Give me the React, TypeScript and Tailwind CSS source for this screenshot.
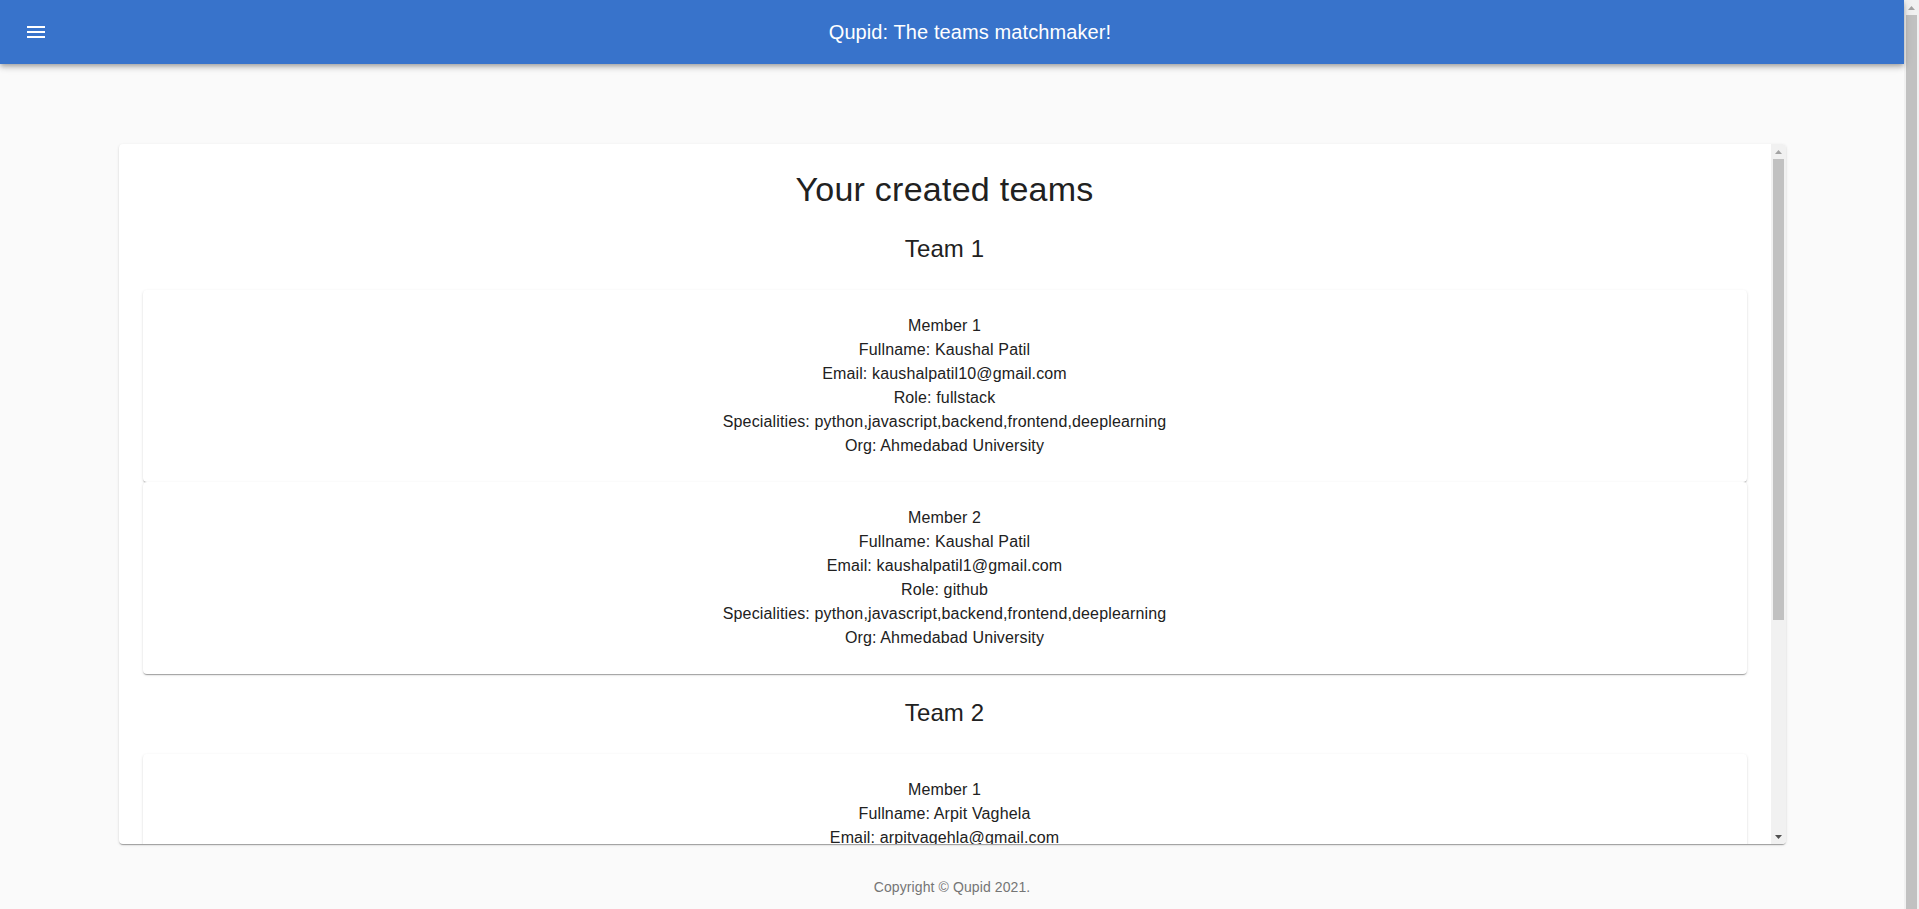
import React from 'react';

interface Member {
  fullname: string;
  email: string;
  role: string;
  specialities: string;
  org: string;
}

interface Team {
  name: string;
  members: Member[];
}

const teams: Team[] = [
  {
    name: 'Team 1',
    members: [
      {
        fullname: 'Kaushal Patil',
        email: 'kaushalpatil10@gmail.com',
        role: 'fullstack',
        specialities: 'python,javascript,backend,frontend,deeplearning',
        org: 'Ahmedabad University',
      },
      {
        fullname: 'Kaushal Patil',
        email: 'kaushalpatil1@gmail.com',
        role: 'github',
        specialities: 'python,javascript,backend,frontend,deeplearning',
        org: 'Ahmedabad University',
      },
    ],
  },
  {
    name: 'Team 2',
    members: [
      {
        fullname: 'Arpit Vaghela',
        email: 'arpitvagehla@gmail.com',
        role: 'backend',
        specialities: 'python,backend,machinelearning',
        org: 'Ahmedabad University',
      },
      {
        fullname: 'Kaushal Patil',
        email: 'kaushalpatil10@gmail.com',
        role: 'fullstack',
        specialities: 'python,javascript,backend,frontend,deeplearning',
        org: 'Ahmedabad University',
      },
    ],
  },
];

const paperShadow =
  'shadow-[0_2px_1px_-1px_rgba(0,0,0,0.2),0_1px_1px_0_rgba(0,0,0,0.14),0_1px_3px_0_rgba(0,0,0,0.12)]';

// Classic scrollbar arrow (the sandbox browser hides real scrollbars)
function Arrow({ down = false, dark = false }: { down?: boolean; dark?: boolean }) {
  return (
    <div className="h-[15px] flex items-center justify-center shrink-0">
      <svg width="7" height="4" viewBox="0 0 7 4" className={dark ? 'text-[#505050]' : 'text-[#a3a3a3]'}>
        <path d={down ? 'M0 0h7L3.5 4z' : 'M3.5 0L7 4H0z'} fill="currentColor" />
      </svg>
    </div>
  );
}

function MemberCard({ member, index }: { member: Member; index: number }) {
  return (
    <div className={`bg-white rounded-[4px] py-6 text-center text-[16px] leading-6 tracking-[0.14px] text-[#212121] ${paperShadow}`}>
      <p>Member {index + 1}</p>
      <p>Fullname: {member.fullname}</p>
      <p>Email: {member.email}</p>
      <p>Role: {member.role}</p>
      <p>Specialities: {member.specialities}</p>
      <p>Org: {member.org}</p>
    </div>
  );
}

export default function App() {
  return (
    <div className="flex h-screen overflow-hidden bg-[#fafafa] font-['Liberation_Sans',Arial,sans-serif]">
      <div className="w-[1904px] shrink-0 flex flex-col">
        {/* App bar */}
        <header className="relative z-10 h-16 shrink-0 bg-[#3873cb] px-6 flex items-center shadow-[0_2px_4px_-1px_rgba(0,0,0,0.2),0_4px_5px_0_rgba(0,0,0,0.14),0_1px_10px_0_rgba(0,0,0,0.12)]">
          <button className="-ml-3 p-3 rounded-full text-white" aria-label="menu">
            <svg className="w-6 h-6" viewBox="0 0 24 24" fill="currentColor">
              <path d="M3 18h18v-2H3v2zm0-5h18v-2H3v2zm0-7v2h18V6H3z" />
            </svg>
          </button>
          <h1 className="flex-1 text-center text-[20px] leading-8 tracking-[0.1px] text-white">
            Qupid: The teams matchmaker!
          </h1>
        </header>

        {/* Created teams */}
        <main className="pt-20">
          <div className={`mx-auto w-[1667px] h-[700px] flex overflow-hidden bg-white rounded-[4px] ${paperShadow}`}>
            <div className="flex-1 min-w-0 overflow-hidden p-6">
              <h2 className="text-center text-[34px] leading-[42px] tracking-[0.25px] text-[#212121]">Your created teams</h2>
              {teams.map((team) => (
                <section key={team.name} className="mt-[23px]">
                  <h3 className="text-center text-[24px] leading-8 tracking-[0.1px] text-[#212121] mb-[25px]">{team.name}</h3>
                  <div>
                    {team.members.map((m, j) => (
                      <MemberCard key={j} member={m} index={j} />
                    ))}
                  </div>
                </section>
              ))}
            </div>
            <div className="w-[15px] shrink-0 bg-[#f1f1f1] flex flex-col">
              <Arrow />
              <div className="px-[2px]">
                <div className="h-[461px] bg-[#c1c1c1]" />
              </div>
              <div className="flex-1" />
              <Arrow down dark />
            </div>
          </div>
        </main>

        <footer className="mt-[33px] text-center text-[14px] leading-5 tracking-[0.1px] text-[#757575]">
          Copyright © Qupid 2021.
        </footer>
      </div>

      {/* Page scrollbar */}
      <div className="w-[15px] shrink-0 bg-[#f1f1f1] flex flex-col">
        <Arrow />
        <div className="flex-1 px-[2px]">
          <div className="h-full bg-[#c1c1c1]" />
        </div>
      </div>
    </div>
  );
}
